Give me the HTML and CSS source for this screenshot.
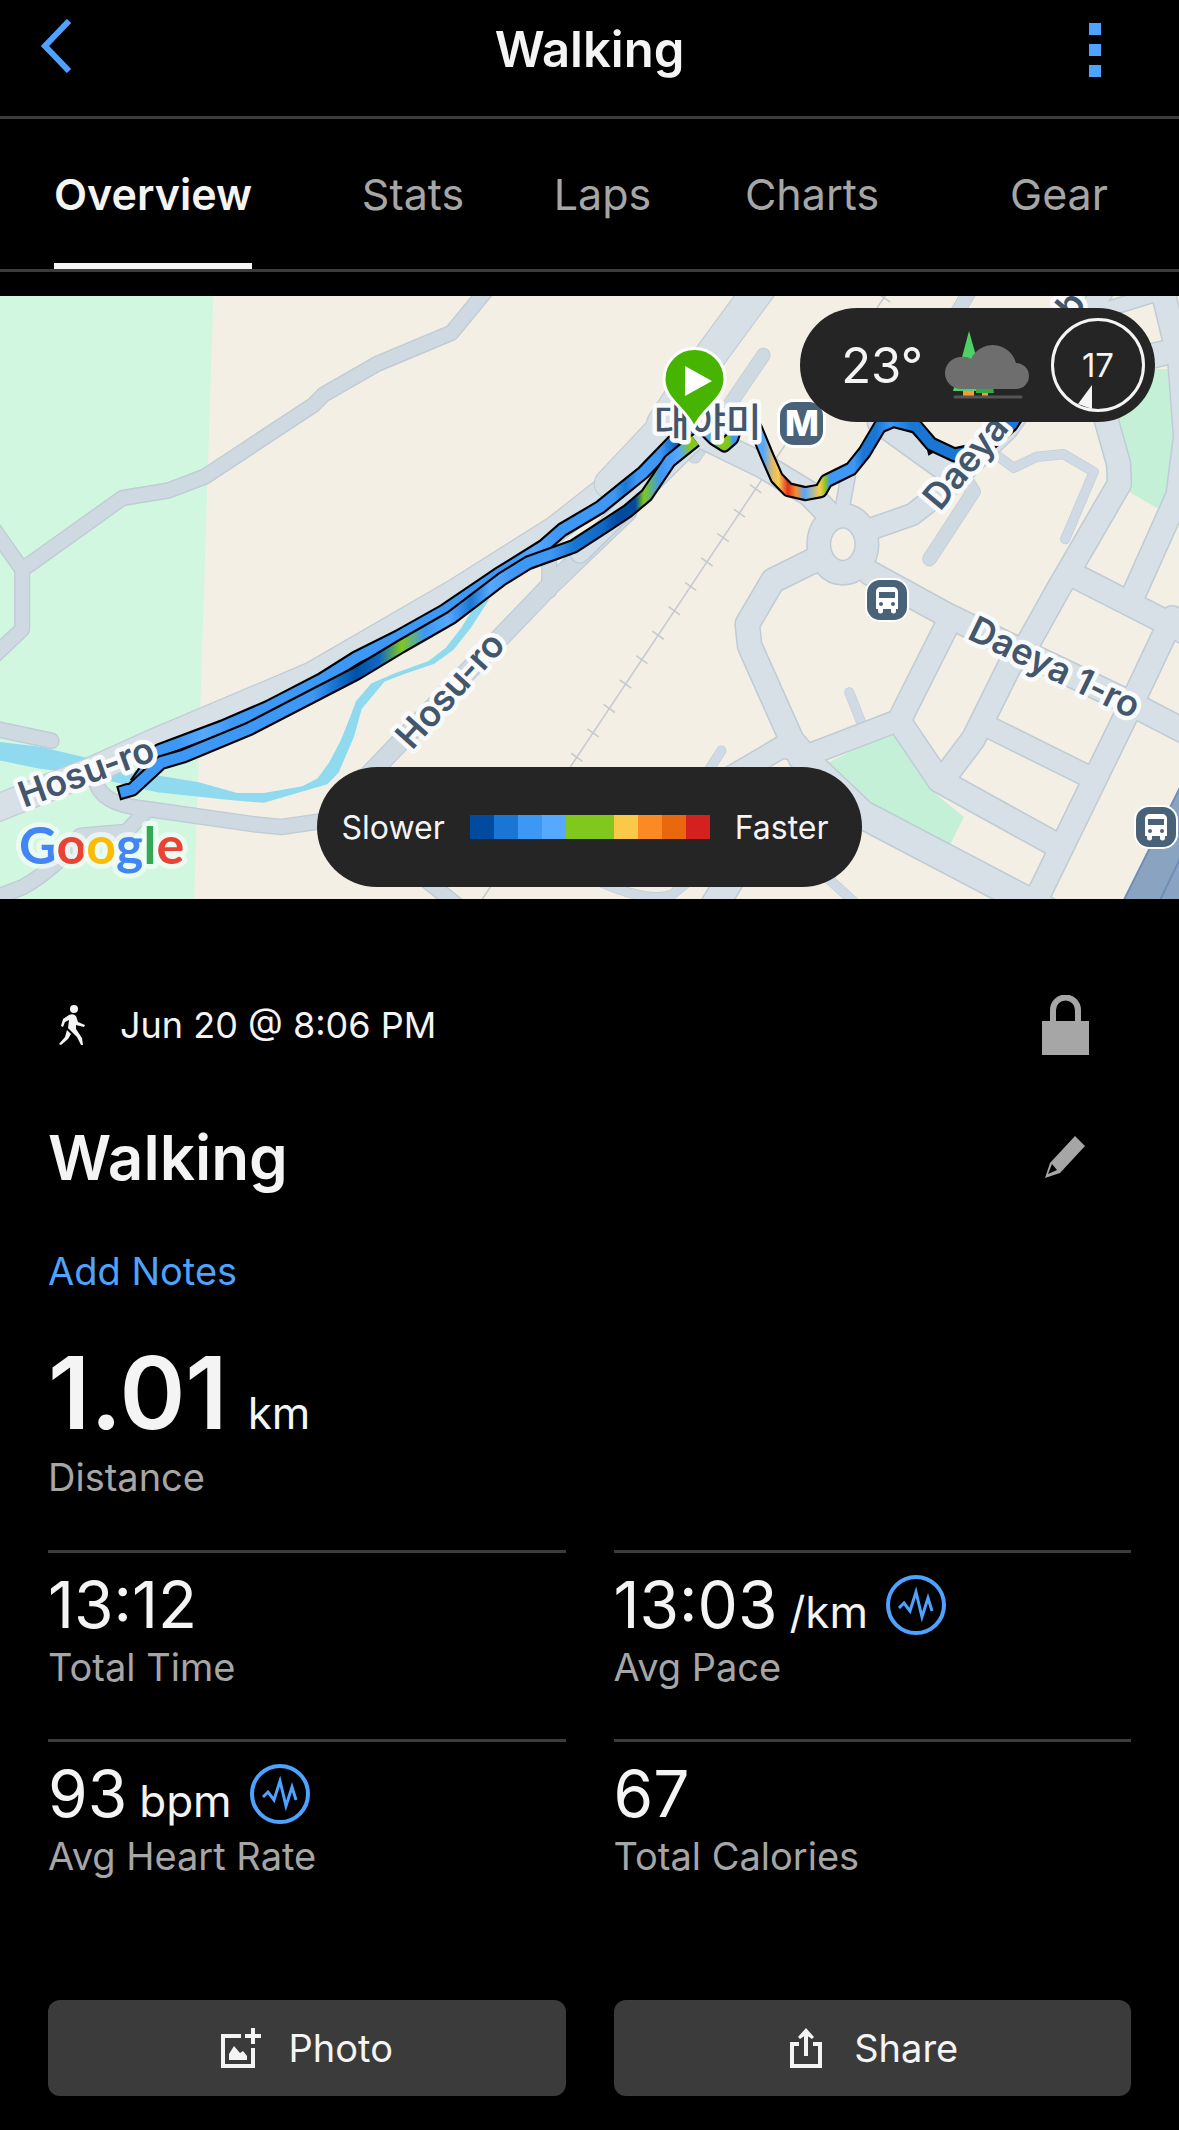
FILE: index.html
```html
<!DOCTYPE html>
<html lang="en">
<head>
  <meta charset="UTF-8" />
  <meta name="viewport" content="width=device-width, initial-scale=1" />
  <title>Walking</title>
  <link rel="stylesheet" href="styles.css">
</head>
<body>
  <header class="header">
    <button class="icon-btn" aria-label="Back">
      <svg width="32" height="54" viewBox="0 0 32 54" fill="none" stroke="#4da3ff" stroke-width="6"><path d="M29 2 5 27l24 25" /></svg>
    </button>
    <h1>Walking</h1>
    <button class="icon-btn icon-btn-more" aria-label="More">
      <svg width="12" height="54" viewBox="0 0 12 54" fill="#4da3ff"><path d="M0 0h12v12H0zM0 21h12v12H0zM0 42h12v12H0z" /></svg>
    </button>
  </header>

  <nav class="tabs" aria-label="Activity">
    <a class="tab active" href="#overview">Overview</a>
    <a class="tab" href="#stats">Stats</a>
    <a class="tab" href="#laps">Laps</a>
    <a class="tab" href="#charts">Charts</a>
    <a class="tab" href="#gear">Gear</a>
  </nav>

  <main>
    <section class="map" aria-label="Route map">
      <svg class="map-svg" viewBox="0 0 1179 603" preserveAspectRatio="xMidYMid slice">
        <defs>
          <linearGradient id="outbound" gradientUnits="userSpaceOnUse" x1="-1206" y1="0" x2="300" y2="0">
            <stop offset="0" stop-color="#3d97f5" /><stop offset=".336" stop-color="#3d97f5" />
            <stop offset=".372" stop-color="#1a76d4" /><stop offset=".412" stop-color="#0050a8" />
            <stop offset=".452" stop-color="#1068c4" /><stop offset=".491" stop-color="#80c81e" />
            <stop offset=".531" stop-color="#3d97f5" /><stop offset=".571" stop-color="#57a8ff" />
            <stop offset=".611" stop-color="#1a76d4" /><stop offset=".644" stop-color="#57a8ff" />
            <stop offset=".69" stop-color="#3d97f5" /><stop offset=".75" stop-color="#3d97f5" />
            <stop offset=".79" stop-color="#1a76d4" /><stop offset=".84" stop-color="#1068c4" />
            <stop offset=".867" stop-color="#004a9f" /><stop offset=".897" stop-color="#004a9f" />
            <stop offset=".912" stop-color="#80c81e" /><stop offset=".94" stop-color="#3d97f5" />
            <stop offset=".973" stop-color="#57a8ff" /><stop offset=".993" stop-color="#80c81e" />
          </linearGradient>
          <linearGradient id="inbound" gradientUnits="userSpaceOnUse" x1="-1206" y1="0" x2="300" y2="0">
            <stop offset="0" stop-color="#3d97f5" /><stop offset=".1" stop-color="#3d97f5" />
            <stop offset=".146" stop-color="#57a8ff" /><stop offset=".2" stop-color="#3d97f5" />
            <stop offset=".68" stop-color="#3d97f5" /><stop offset=".72" stop-color="#57a8ff" />
            <stop offset=".76" stop-color="#3d97f5" /><stop offset=".86" stop-color="#3d97f5" />
            <stop offset=".88" stop-color="#1a76d4" /><stop offset=".9" stop-color="#3d97f5" />
            <stop offset=".94" stop-color="#3d97f5" /><stop offset=".965" stop-color="#1068c4" />
          </linearGradient>
          <linearGradient id="start" gradientUnits="userSpaceOnUse" x1="330" y1="0" x2="1170" y2="0">
            <stop offset="0" stop-color="#57a8ff" /><stop offset=".05" stop-color="#80c81e" />
            <stop offset=".07" stop-color="#80c81e" /><stop offset=".085" stop-color="#3d97f5" />
            <stop offset=".18" stop-color="#57a8ff" /><stop offset=".205" stop-color="#d8b872" />
            <stop offset=".226" stop-color="#fbc94a" /><stop offset=".255" stop-color="#e03020" />
            <stop offset=".28" stop-color="#fb8a25" /><stop offset=".307" stop-color="#57a8ff" />
            <stop offset=".355" stop-color="#fbc94a" /><stop offset=".372" stop-color="#80c81e" />
            <stop offset=".385" stop-color="#3d97f5" /><stop offset=".46" stop-color="#3d97f5" />
            <stop offset=".49" stop-color="#1a76d4" /><stop offset=".53" stop-color="#1a76d4" />
            <stop offset=".575" stop-color="#3d97f5" /><stop offset=".64" stop-color="#1a76d4" />
            <stop offset="1" stop-color="#1a76d4" />
          </linearGradient>
          <g id="bus">
            <rect x="-22" y="-22" width="44" height="44" rx="15" fill="#fff" />
            <rect x="-20" y="-20" width="40" height="40" rx="13" fill="#4a6278" />
            <path fill="#fff" d="M-6-13H6c3 0 5 2 5 5V9H9v2a2 2 0 0 1-5 0V9h-8v2a2 2 0 0 1-5 0V9h-2V-8c0-3 2-5 5-5z" />
            <path fill="#4a6278" d="M-8-8H8v6H-8z" />
            <circle cx="-6" cy="4" r="2" fill="#4a6278" /><circle cx="6" cy="4" r="2" fill="#4a6278" />
          </g>
        </defs>

        <rect width="1179" height="603" fill="#f4efe4" />

        <!-- west side -->
        <g transform="translate(0 -6) scale(.3827 .3954)" fill="none">
          <path fill="#d2f7e1" d="M0 0h558l-51 1560H0z" />
          <g class="road-edge">
            <path stroke-width="42" d="M1280-10 1180 108 985 187 845 265 820 290 535 472 440 507 320 526 58 707V858L-20 930M-20 600 58 707M-10 1110 135 1140M250 1240Q260 1300 380 1312L670 1352 735 1358 900 1335M380 1320 330 1370 210 1380Q150 1460 60 1510L-20 1540M1435 760V680M1110 1490 1200 1560" />
            <path stroke-width="52" d="M1640 560 1430 755 1000 1190 880 1310" />
          </g>
          <g class="road-minor">
            <path stroke-width="35" d="M1280-10 1180 108 985 187 845 265 820 290 535 472 440 507 320 526 58 707V858L-20 930M-20 600 58 707M-10 1110 135 1140M250 1240Q260 1300 380 1312L670 1352 735 1358 900 1335M380 1320 330 1370 210 1380Q150 1460 60 1510L-20 1540M1435 760V680M1110 1490 1200 1560" />
            <path stroke-width="46" d="M1640 560 1430 755 1000 1190 880 1310" />
          </g>
          <path fill="#8fdaee" d="M0 1143 105 1155 300 1200 400 1226 520 1245 620 1272H690L790 1255 830 1235 860 1195 890 1140 915 1080 930 1040 970 995 1030 970 1120 938 1165 905 1205 855 1240 800 1280 780 1230 855 1185 910 1135 945 1060 970 1005 990 945 1060 925 1130 885 1220 855 1250 690 1297 600 1290 410 1270 300 1245 220 1225 100 1210 0 1190z" />
          <path class="road-edge" stroke-width="72" d="M-20 1315 240 1215 400 1145 815 975 1190 765 1450 606 1590 500 1735 355" />
          <path class="road-main" stroke-width="66" d="M-20 1315 240 1215 400 1145 815 975 1190 765 1450 606 1590 500 1735 355" />
        </g>

        <!-- east side -->
        <g transform="translate(580 -6) scale(.382 .3954)" fill="none">
          <path fill="#c3f0d7" d="M1380 200H1538L1553 370 1533 515 1512 552 1400 490z" />
          <path fill="#c3f0d7" d="M620 1210 817 1115 925 1270 1005 1332 968 1405 720 1283z" />
          <path stroke="#c6c9cf" stroke-width="4" d="M830-30 459 504-450 1822" />
          <path stroke="#c6c9cf" stroke-width="36" stroke-dasharray="4 71" d="M461 501-450 1822M798 19 796 22" />

          <g class="road-edge">
            <path stroke-width="26" d="M1080 410 1135 450 1195 422 1265 415 1345 460 1270 630M705 1018 737 1095M370 1165 320 1240M640 1480 720 1550M60 1500Q180 1550 240 1530L290 1490" />
            <path stroke-width="38" d="M480 165 300 420M1010 480 1030 510 915 680M1035-20 985 60" />
          </g>
          <g class="road-minor">
            <path stroke="#cfdae4" stroke-width="23" d="M1080 410 1135 450 1195 422 1265 415 1345 460 1270 630M705 1018 737 1095M370 1165 320 1240M640 1480 720 1550M60 1500Q180 1550 240 1530L290 1490" />
            <path stroke-width="34" d="M480 165 300 420M1010 480 1030 510 915 680M1035-20 985 60" />
          </g>

          <g class="road-edge">
            <path stroke-width="86" d="M490-30 270 260 215 340" />
            <path stroke-width="76" d="M215 345 74 490" />
            <path stroke-width="55" d="M310 370 0 665" />
            <path stroke-width="68" d="M300 360 480 445 600 515 645 560M620 680 505 735 438 845 444 900 555 1140 600 1190" />
            <path stroke-width="60" d="M760 605 870 568 960 500 1120 350 1330 60 1370 0M780 335 960 460M380 1240 530 1155 600 1175 830 1090M1080 1110 1320 1225" />
            <path stroke-width="42" d="M685 560 702 470M1340 60 1560-5" />
            <path stroke-width="67" d="M758 715 960 822 1170 920 1430 1040 1600 1125M957 855 835 1090 940 1240 1240 1400M960 1225 1030 1135 1125 950 1175 890 1250 760 1412 490 1410 440 1375 320 1340 200M1300 725 1600 873M1525 0 1570 180 1585 370 1565 520 1440 790M1550 830 1440 1055 1185 1560M1440 180 1570 150" />
            <path stroke-width="77" d="M580 1180 740 1327 1240 1580M400 1480 350 1560" />
            <ellipse cx="688" cy="643" rx="63" ry="72" stroke-width="66" />
          </g>
          <g class="road-main">
            <path stroke-width="80" d="M490-30 270 260 215 340" />
            <path stroke-width="70" d="M215 345 74 490" />
            <path stroke-width="48" d="M310 370 0 665" />
            <path stroke-width="60" d="M300 360 480 445 600 515 645 560M620 680 505 735 438 845 444 900 555 1140 600 1190" />
            <path stroke-width="52" d="M760 605 870 568 960 500 1120 350 1330 60 1370 0M780 335 960 460M380 1240 530 1155 600 1175 830 1090M1080 1110 1320 1225" />
            <path stroke-width="34" d="M685 560 702 470M1340 60 1560-5" />
            <path stroke-width="59" d="M758 715 960 822 1170 920 1430 1040 1600 1125M957 855 835 1090 940 1240 1240 1400M960 1225 1030 1135 1125 950 1175 890 1250 760 1412 490 1410 440 1375 320 1340 200M1300 725 1600 873M1525 0 1570 180 1585 370 1565 520 1440 790M1550 830 1440 1055 1185 1560M1440 180 1570 150" />
            <path stroke-width="69" d="M580 1180 740 1327 1240 1580M400 1480 350 1560" />
            <ellipse cx="688" cy="643" rx="63" ry="72" stroke-width="58" />
          </g>
          <path fill="#8aa3c1" stroke="#6d8db8" stroke-width="5" d="M1420 1550 1580 1240V1550zM1515 1550 1580 1420" />

          <!-- tracked route -->
          <g stroke-linejoin="round">
            <path stroke="#000" stroke-width="38" d="M-1163 1250-1101 1165-936 1105-816 1055-676 985-586 930-476 877-356 812-216 720-96 648-46 606 52 550 120 497 165 462 245 382 290 350" />
            <path stroke="url(#inbound)" stroke-width="27" d="M-1163 1250-1101 1165-936 1105-816 1055-676 985-586 930-476 877-356 812-216 720-96 648-46 606 52 550 120 497 165 462 245 382 290 350" />
            <path stroke="#000" stroke-width="38" d="M-1209 1273-1171 1262-1096 1195-1036 1178-866 1110-686 1020-586 970-466 900-336 828-206 732-136 690-16 648 70 594 125 559 175 518 235 432 302 380" />
            <path stroke="url(#outbound)" stroke-width="27" d="M-1204 1271-1171 1262-1096 1195-1036 1178-866 1110-686 1020-586 970-466 900-336 828-206 732-136 690-16 648 70 594 125 559 175 518 235 432 302 380" />
            <path fill="#000" d="M906 395 912 419 932 408z" />
            <path stroke="#000" stroke-width="38" d="M330 355 350 375 378 392 398 375 410 340 430 320 460 350 490 420 515 475 545 505 590 515 630 508 645 483 710 452 745 410 785 345 820 330 880 345 920 390 980 417 1060 400 1130 340 1170 280" />
            <path stroke="url(#start)" stroke-width="27" d="M330 355 350 375 378 392 398 375 410 340 430 320 460 350 490 420 515 475 545 505 590 515 630 508 645 483 710 452 745 410 785 345 820 330 880 345 920 390 980 417 1060 400 1130 340 1170 280" />
          </g>
        </g>

        <g class="map-label">
          <text transform="translate(24 512) rotate(-20)">Hosu-ro</text>
          <text transform="translate(412 455) rotate(-48)">Hosu-ro</text>
          <text transform="translate(940 216) rotate(-50)">Daeya</text>
          <text transform="translate(1052 50) rotate(-50)">mb</text>
          <text transform="translate(966 342) rotate(26)">Daeya 1-ro</text>
          <text class="station" x="654" y="140" lang="ko">대야미</text>
        </g>

        <rect x="777" y="103" width="49" height="49" rx="17" fill="#fff" />
        <rect x="780" y="106" width="43" height="43" rx="14" fill="#4a6278" />
        <text class="metro" x="802" y="140" text-anchor="middle">M</text>
        <use href="#bus" x="887" y="304" />
        <use href="#bus" x="1156" y="531" />

        <path fill="#46b400" stroke="#fff" stroke-width="3" d="M694 132C686 112 664 104 664 83a30 30 0 0 1 61 0c0 21-23 29-31 49z" />
        <path fill="#fff" d="M685 70v30l27-15z" />

        <text class="google" x="19" y="568"><tspan fill="#4285f4">G</tspan><tspan fill="#ea4335">o</tspan><tspan fill="#fbbc05">o</tspan><tspan fill="#4285f4">g</tspan><tspan fill="#34a853">l</tspan><tspan fill="#ea4335">e</tspan></text>
      </svg>

      <div class="weather">
        <span class="temp">23°</span>
        <svg width="84" height="68" viewBox="0 0 84 68">
          <path fill="#4cd264" d="M24 0 37 46H46V60H8z" />
          <path fill="#2fae46" d="M31 56h17l1 6H31z" />
          <path fill="#ff9830" d="M18 60h11v5H18zM37 62h6v3h-6z" />
          <path fill="#6e6e6e" d="M16 58A16 16 0 0 1 16 26Q22 25 26 28A24 24 0 0 1 71 32 13 13 0 0 1 71 58z" />
          <path stroke="#555" stroke-width="3" stroke-linecap="round" d="M10 66h66" />
        </svg>
        <div class="wind">
          <span>17</span>
          <svg width="14" height="24" viewBox="0 0 14 24"><path fill="#f4f4f4" d="M14 0v24L0 19z" /></svg>
        </div>
      </div>

      <div class="legend">
        <span>Slower</span>
        <div class="scale">
          <i class="pace-1"></i><i class="pace-2"></i><i class="pace-3"></i><i class="pace-4"></i><i class="pace-5"></i><i class="pace-5"></i><i class="pace-6"></i><i class="pace-7"></i><i class="pace-8"></i><i class="pace-9"></i>
        </div>
        <span>Faster</span>
      </div>
    </section>

    <section class="info">
      <div class="date-row">
        <svg width="26" height="40" viewBox="0 0 26 40" fill="#f4f4f4">
          <circle cx="15" cy="4" r="4" />
          <path d="M10 10Q14 8 17 11L19 17 26 20 25 22 17 20V24L23 33 24 40H22L18 32 9 23 10 15 6 17 4 22 2 21 4 14zM8 25 12 29 9 34 2 40 0 39 6 32z" />
        </svg>
        <time>Jun 20 @ 8:06 PM</time>
        <button class="icon-btn row-btn" aria-label="Privacy">
          <svg width="47" height="60" viewBox="0 0 47 60"><path fill="#a6a6a6" d="M0 26H47V60H0z" /><path fill="none" stroke="#a6a6a6" stroke-width="6" d="M11 27V15a12 12 0 0 1 25 0V27" /></svg>
        </button>
      </div>
      <div class="title-row">
        <h2>Walking</h2>
        <button class="icon-btn row-btn pencil" aria-label="Edit name">
          <svg width="40" height="42" viewBox="0 0 40 42"><path fill="#a6a6a6" fill-rule="evenodd" d="M30 0 40 10 15 37 0 42 5 27zM7 28 3 38 12 34z" /></svg>
        </button>
      </div>
      <a class="notes" href="#notes">Add Notes</a>
    </section>

    <section class="stats">
      <div class="stat stat-main">
        <div class="value">1.01 <span class="unit">km</span></div>
        <div class="label">Distance</div>
      </div>
      <div class="stat">
        <div class="value">13:12</div>
        <div class="label">Total Time</div>
      </div>
      <div class="stat">
        <div class="value">13:03 <span class="unit">/km</span>
          <a class="pulse" href="#pace" aria-label="Pace chart"><svg width="60" height="60" viewBox="0 0 60 60" fill="none" stroke="#4da3ff"><circle cx="30" cy="30" r="28" stroke-width="4" /><path stroke-width="3" d="M13 33 18 28 24 36 30 17 36 42 42 23 46 36" /></svg></a>
        </div>
        <div class="label">Avg Pace</div>
      </div>
      <div class="stat">
        <div class="value">93 <span class="unit">bpm</span>
          <a class="pulse" href="#heart-rate" aria-label="Heart rate chart"><svg width="60" height="60" viewBox="0 0 60 60" fill="none" stroke="#4da3ff"><circle cx="30" cy="30" r="28" stroke-width="4" /><path stroke-width="3" d="M13 33 18 28 24 36 30 17 36 42 42 23 46 36" /></svg></a>
        </div>
        <div class="label">Avg Heart Rate</div>
      </div>
      <div class="stat">
        <div class="value">67</div>
        <div class="label">Total Calories</div>
      </div>
    </section>

    <div class="actions">
      <button class="action">
        <svg width="40" height="40" viewBox="0 0 40 40" fill="#f4f4f4"><path d="M0 6H20V10H4V36H30V20H34V40H0zM30 0h4v6h6v4h-6v6h-4v-6h-6V6h6zM8 32V26L13 18 19 25 22 23 26 28V32z" /></svg>
        Photo
      </button>
      <button class="action">
        <svg width="40" height="40" viewBox="-4 0 40 40"><path fill="none" stroke="#f4f4f4" stroke-width="4" d="M9 16H2V38H30V16H23M16 28V4" /><path fill="#f4f4f4" d="M16 0 24 9 22 11 16 7 10 11 8 9z" /></svg>
        Share
      </button>
    </div>
  </main>
</body>
</html>
```

FILE: styles.css
```css
*, *::before, *::after {
  box-sizing: border-box;
}
body {
  margin: 0;
  background: #000;
  color: #f4f4f4;
  font-family: Inter, 'Noto Sans CJK KR', sans-serif;
}
h1, h2 {
  margin: 0;
  font-weight: 600;
}
a {
  color: #4da3ff;
  text-decoration: none;
}
svg {
  display: block;
}
button {
  font: inherit;
  color: inherit;
  border: none;
  cursor: pointer;
}
.icon-btn {
  padding: 0;
  background: none;
}

/* Header */
.header {
  display: grid;
  grid-template-columns: 1fr auto 1fr;
  align-items: center;
  height: 119px;
  padding: 0 78px 20px 40px;
  border-bottom: 3px solid #3c3c3c;
}
.header .icon-btn {
  padding-bottom: 4px;
}
.header .icon-btn-more {
  justify-self: end;
  padding: 4px 0 0;
}
.header h1 {
  padding: 4px 0 0 38px;
  font-size: 49px;
  line-height: 60px;
}

/* Tabs */
.tabs {
  display: grid;
  grid-template-columns: 306fr 214fr 165fr 254fr 240fr;
  justify-items: center;
  height: 153px;
  border-bottom: 3px solid #3c3c3c;
}
.tab {
  display: flex;
  align-items: center;
  padding-top: 6px;
  color: #a6a6a6;
  font-size: 43px;
  border-bottom: 6px solid transparent;
}
.tab.active {
  color: #f4f4f4;
  font-weight: 600;
  border-color: #f4f4f4;
}

/* Map */
.map {
  position: relative;
  margin-top: 24px;
}
.map-svg {
  width: 100%;
  height: auto;
}
.road-edge {
  stroke: #bfccd5;
  stroke-linecap: round;
  stroke-linejoin: round;
}
.road-main {
  stroke: #d8e0e7;
  stroke-linecap: round;
  stroke-linejoin: round;
}
.road-minor {
  stroke: #cfd9e2;
  stroke-linecap: round;
  stroke-linejoin: round;
}
.map-label {
  font-size: 36px;
  font-weight: 600;
  fill: #43566b;
  stroke: #f8fafc;
  stroke-width: 9px;
  stroke-linejoin: round;
  paint-order: stroke;
}
.station {
  font-family: 'Noto Sans CJK KR', sans-serif;
  font-size: 39px;
  font-weight: 500;
}
.metro {
  font-size: 36px;
  font-weight: 800;
  fill: #fff;
}
.google {
  font-family: Lato, sans-serif;
  font-size: 52px;
  font-weight: 700;
  stroke: #f4fdf8;
  stroke-opacity: .7;
  stroke-width: 10px;
  stroke-linejoin: round;
  paint-order: stroke;
}
.weather {
  position: absolute;
  top: 12px;
  right: 24px;
  display: flex;
  align-items: center;
  height: 114px;
  padding: 0 10px 0 41px;
  gap: 22px;
  border-radius: 57px;
  background: #252525;
}
.temp {
  font-size: 49px;
}
.wind {
  position: relative;
  display: flex;
  align-items: center;
  justify-content: center;
  width: 94px;
  height: 94px;
  border: 3px solid #f4f4f4;
  border-radius: 50%;
  font-size: 33px;
}
.wind svg {
  position: absolute;
  bottom: 0;
  left: 24px;
}
.legend {
  position: absolute;
  right: 0;
  bottom: 12px;
  left: 0;
  display: flex;
  align-items: center;
  gap: 25px;
  width: fit-content;
  height: 120px;
  margin: 0 auto;
  padding: 0 33px 0 24px;
  border-radius: 60px;
  background: #252525;
  font-size: 32px;
}
.scale {
  display: flex;
}
.scale i {
  width: 24px;
  height: 24px;
}
.pace-1 { background: #004a9f; }
.pace-2 { background: #1a76d4; }
.pace-3 { background: #3d97f5; }
.pace-4 { background: #57a8ff; }
.pace-5 { background: #80c81e; }
.pace-6 { background: #fbc94a; }
.pace-7 { background: #fb8a25; }
.pace-8 { background: #ea680d; }
.pace-9 { background: #d52020; }

/* Activity info */
.info {
  padding: 96px 90px 0 48px;
}
.date-row {
  display: flex;
  align-items: center;
  height: 60px;
  padding-left: 11px;
  gap: 35px;
  font-size: 36px;
}
.row-btn {
  margin-left: auto;
}
.title-row {
  display: flex;
  align-items: center;
  height: 80px;
  margin-top: 62px;
}
.title-row h2 {
  font-size: 62px;
}
.pencil {
  margin-right: 4px;
}
.notes {
  display: inline-block;
  margin-top: 50px;
  font-size: 38px;
  line-height: 48px;
}

/* Stats */
.stats {
  display: grid;
  grid-template-columns: 1fr 1fr;
  column-gap: 48px;
  padding: 0 48px;
}
.stat {
  height: 189px;
  padding-top: 20px;
  border-top: 3px solid #3c3c3c;
}
.stat-main {
  grid-column: 1 / -1;
  height: 255px;
  padding-top: 44px;
  border-top: none;
}
.value {
  display: flex;
  align-items: baseline;
  gap: 12px;
  font-size: 64px;
  line-height: 64px;
}
.stat-main .value {
  gap: 20px;
  font-size: 100px;
  font-weight: 600;
  line-height: 108px;
}
.stat .unit {
  font-size: 44px;
  font-weight: 400;
  line-height: 44px;
}
.pulse {
  align-self: center;
  margin-left: 6px;
}
.label {
  color: #a6a6a6;
  font-size: 38px;
  line-height: 60px;
}

/* Buttons */
.actions {
  display: grid;
  grid-template-columns: 1fr 1fr;
  gap: 48px;
  padding: 72px 48px 34px;
}
.action {
  display: flex;
  align-items: center;
  justify-content: center;
  gap: 28px;
  height: 96px;
  border-radius: 12px;
  background: #3b3b3b;
  font-size: 38px;
}
```
